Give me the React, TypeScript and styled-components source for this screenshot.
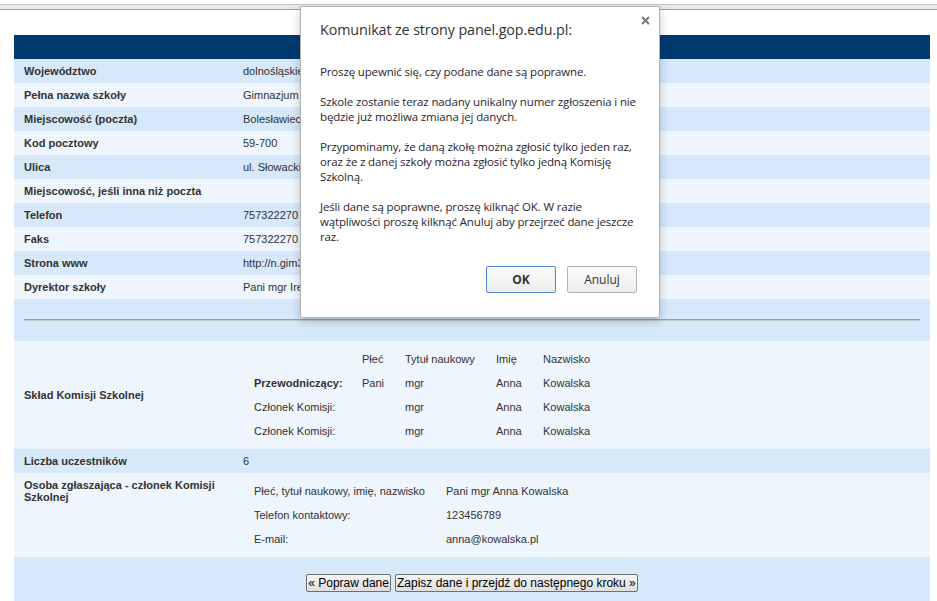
import React from "react";
import styled, { createGlobalStyle } from "styled-components";

const GlobalStyle = createGlobalStyle`
  html, body {
    margin: 0;
    padding: 0;
    background: #fff;
    font-family: "Liberation Sans", Arial, sans-serif;
  }
`;

type Tone = "dark" | "light";

const schoolRows: { label: string; value: string }[] = [
  { label: "Województwo", value: "dolnośląskie" },
  { label: "Pełna nazwa szkoły", value: "Gimnazjum nr 3" },
  { label: "Miejscowość (poczta)", value: "Bolesławiec" },
  { label: "Kod pocztowy", value: "59-700" },
  { label: "Ulica", value: "ul. Słowackiego" },
  { label: "Miejscowość, jeśli inna niż poczta", value: "" },
  { label: "Telefon", value: "757322270" },
  { label: "Faks", value: "757322270" },
  { label: "Strona www", value: "http://n.gim3.pl" },
  { label: "Dyrektor szkoły", value: "Pani mgr Irena" },
];

const committee = [
  { role: "Przewodniczący:", chair: true, sex: "Pani", title: "mgr", name: "Anna", surname: "Kowalska" },
  { role: "Członek Komisji:", chair: false, sex: "", title: "mgr", name: "Anna", surname: "Kowalska" },
  { role: "Członek Komisji:", chair: false, sex: "", title: "mgr", name: "Anna", surname: "Kowalska" },
];

export default function App() {
  return (
    <Page>
      <GlobalStyle />
      <ChromeBar />
      <Content>
        <FormTable>
          <HeaderBar />
          {schoolRows.map((row, i) => (
            <Row key={row.label} $tone={i % 2 === 0 ? "dark" : "light"}>
              <Label>{row.label}</Label>
              <Value>{row.value}</Value>
            </Row>
          ))}
          <SeparatorRow>
            <Rule />
          </SeparatorRow>

          <Row $tone="light">
            <Label>Skład Komisji Szkolnej</Label>
            <NestedCell>
              <CommitteeGrid>
                <span />
                <span>Płeć</span>
                <span>Tytuł naukowy</span>
                <span>Imię</span>
                <span>Nazwisko</span>
                {committee.map((m, i) => (
                  <React.Fragment key={i}>
                    <Role $bold={m.chair}>{m.role}</Role>
                    <span>{m.sex}</span>
                    <span>{m.title}</span>
                    <span>{m.name}</span>
                    <span>{m.surname}</span>
                  </React.Fragment>
                ))}
              </CommitteeGrid>
            </NestedCell>
          </Row>

          <Row $tone="dark">
            <Label>Liczba uczestników</Label>
            <Value>6</Value>
          </Row>

          <Row $tone="light" $top>
            <Label $wrap>Osoba zgłaszająca - członek Komisji Szkolnej</Label>
            <NestedCell>
              <ContactGrid>
                <span>Płeć, tytuł naukowy, imię, nazwisko</span>
                <span>Pani mgr Anna Kowalska</span>
                <span>Telefon kontaktowy:</span>
                <span>123456789</span>
                <span>E-mail:</span>
                <span>anna@kowalska.pl</span>
              </ContactGrid>
            </NestedCell>
          </Row>

          <ButtonRow>
            <FormButton type="button">« Popraw dane</FormButton>
            <FormButton type="button">Zapisz dane i przejdź do następnego kroku »</FormButton>
          </ButtonRow>
        </FormTable>
      </Content>

      <Dialog role="dialog">
        <CloseButton aria-label="Zamknij">
          <svg width="9" height="9" viewBox="0 0 9 9">
            <path d="M1 1 L8 8 M8 1 L1 8" stroke="#7a7a7a" strokeWidth="2" />
          </svg>
        </CloseButton>
        <DialogTitle>Komunikat ze strony panel.gop.edu.pl:</DialogTitle>
        <DialogBody>
          <p>Proszę upewnić się, czy podane dane są poprawne.</p>
          <p>
            Szkole zostanie teraz nadany unikalny numer zgłoszenia i nie
            <br />
            będzie już możliwa zmiana jej danych.
          </p>
          <p>
            Przypominamy, że daną zkołę można zgłosić tylko jeden raz,
            <br />
            oraz że z danej szkoły można zgłosić tylko jedną Komisję
            <br />
            Szkolną.
          </p>
          <p>
            Jeśli dane są poprawne, proszę kilknąć OK. W razie
            <br />
            wątpliwości proszę kilknąć Anuluj aby przejrzeć dane jeszcze
            <br />
            raz.
          </p>
        </DialogBody>
        <DialogActions>
          <DialogButton type="button" $primary>OK</DialogButton>
          <DialogButton type="button">Anuluj</DialogButton>
        </DialogActions>
      </Dialog>
    </Page>
  );
}

const Page = styled.div`
  position: relative;
  width: 937px;
  min-height: 601px;
  overflow: hidden;
`;

const ChromeBar = styled.div`
  margin-top: 4px;
  height: 4px;
  background: #e9e9e9;
  border-top: 1px solid #c8c8c8;
  border-bottom: 1px solid #a4a4a4;
`;

const Content = styled.div`
  padding: 25px 7px 0 14px;
`;

const FormTable = styled.div`
  display: flex;
  flex-direction: column;
  width: 916px;
  color: #333;
  font-size: 11px;
`;

const HeaderBar = styled.div`
  height: 24px;
  background: #023a6f;
`;

const Row = styled.div<{ $tone: Tone; $top?: boolean }>`
  display: grid;
  grid-template-columns: 219px 1fr;
  align-items: ${(p) => (p.$top ? "start" : "center")};
  min-height: 24px;
  padding: 0 10px;
  background: ${(p) => (p.$tone === "dark" ? "#d6e8fa" : "#eef5fd")};
`;

const Label = styled.div<{ $wrap?: boolean }>`
  font-weight: bold;
  padding-right: 14px;
  line-height: ${(p) => (p.$wrap ? "12px" : "14px")};
  padding-top: ${(p) => (p.$wrap ? "6px" : "0")};
`;

const Value = styled.div`
  line-height: 14px;
  white-space: nowrap;
`;

const SeparatorRow = styled.div`
  height: 42px;
  padding: 20px 10px 0;
  box-sizing: border-box;
  background: #d6e8fa;
`;

const Rule = styled.div`
  height: 1px;
  background: #9b9b9b;
  border-bottom: 1px solid #c3c9cf;
`;

const NestedCell = styled.div`
  padding: 6px 0 6px 11px;
`;

const CommitteeGrid = styled.div`
  display: grid;
  grid-template-columns: 108px 43px 91px 47px auto;
  grid-auto-rows: 24px;
  align-items: center;
  white-space: nowrap;
`;

const Role = styled.span<{ $bold: boolean }>`
  font-weight: ${(p) => (p.$bold ? "bold" : "normal")};
`;

const ContactGrid = styled.div`
  display: grid;
  grid-template-columns: 192px auto;
  grid-auto-rows: 24px;
  align-items: center;
  white-space: nowrap;
`;

const ButtonRow = styled.div`
  display: flex;
  justify-content: center;
  gap: 4px;
  height: 60px;
  padding-top: 17px;
  box-sizing: border-box;
  background: #d6e8fa;
`;

const FormButton = styled.button`
  height: 18px;
  padding: 0 1px;
  font-family: "Liberation Sans", Arial, sans-serif;
  font-size: 12px;
  line-height: 14px;
  color: #000;
  background: linear-gradient(#f4f4f4, #dedede);
  border: 1px solid #707070;
  border-radius: 2px;
`;

const Dialog = styled.div`
  position: absolute;
  left: 300px;
  top: 6px;
  width: 360px;
  height: 312px;
  box-sizing: border-box;
  background: #fff;
  border: 1px solid #b5b5b5;
  border-radius: 2px;
  box-shadow: 0 3px 10px rgba(0, 0, 0, 0.22);
  font-family: "Open Sans", "Noto Sans", sans-serif;
  color: #2c2530;
`;

const CloseButton = styled.span`
  position: absolute;
  top: 9px;
  right: 9px;
  display: flex;
`;

const DialogTitle = styled.div`
  padding: 13px 19px 0;
  font-size: 14.3px;
  line-height: 20px;
  color: #333;
  letter-spacing: -0.1px;
`;

const DialogBody = styled.div`
  padding: 24px 19px 0;
  font-size: 11.5px;
  line-height: 15px;
  letter-spacing: -0.15px;
  white-space: nowrap;

  p {
    margin: 0 0 15px;
  }
  p:last-child {
    margin-bottom: 0;
  }
`;

const DialogActions = styled.div`
  display: flex;
  justify-content: flex-end;
  gap: 11px;
  padding: 22px 22px 0;
`;

const DialogButton = styled.button<{ $primary?: boolean }>`
  width: 70px;
  height: 27px;
  font-family: "Open Sans", "Noto Sans", sans-serif;
  font-size: 12px;
  font-weight: ${(p) => (p.$primary ? "bold" : "normal")};
  color: #333;
  background: linear-gradient(#fafafa, #ededed);
  border: 1px solid ${(p) => (p.$primary ? "#4d86d4" : "#b4b4b4")};
  border-radius: 2px;
`;
